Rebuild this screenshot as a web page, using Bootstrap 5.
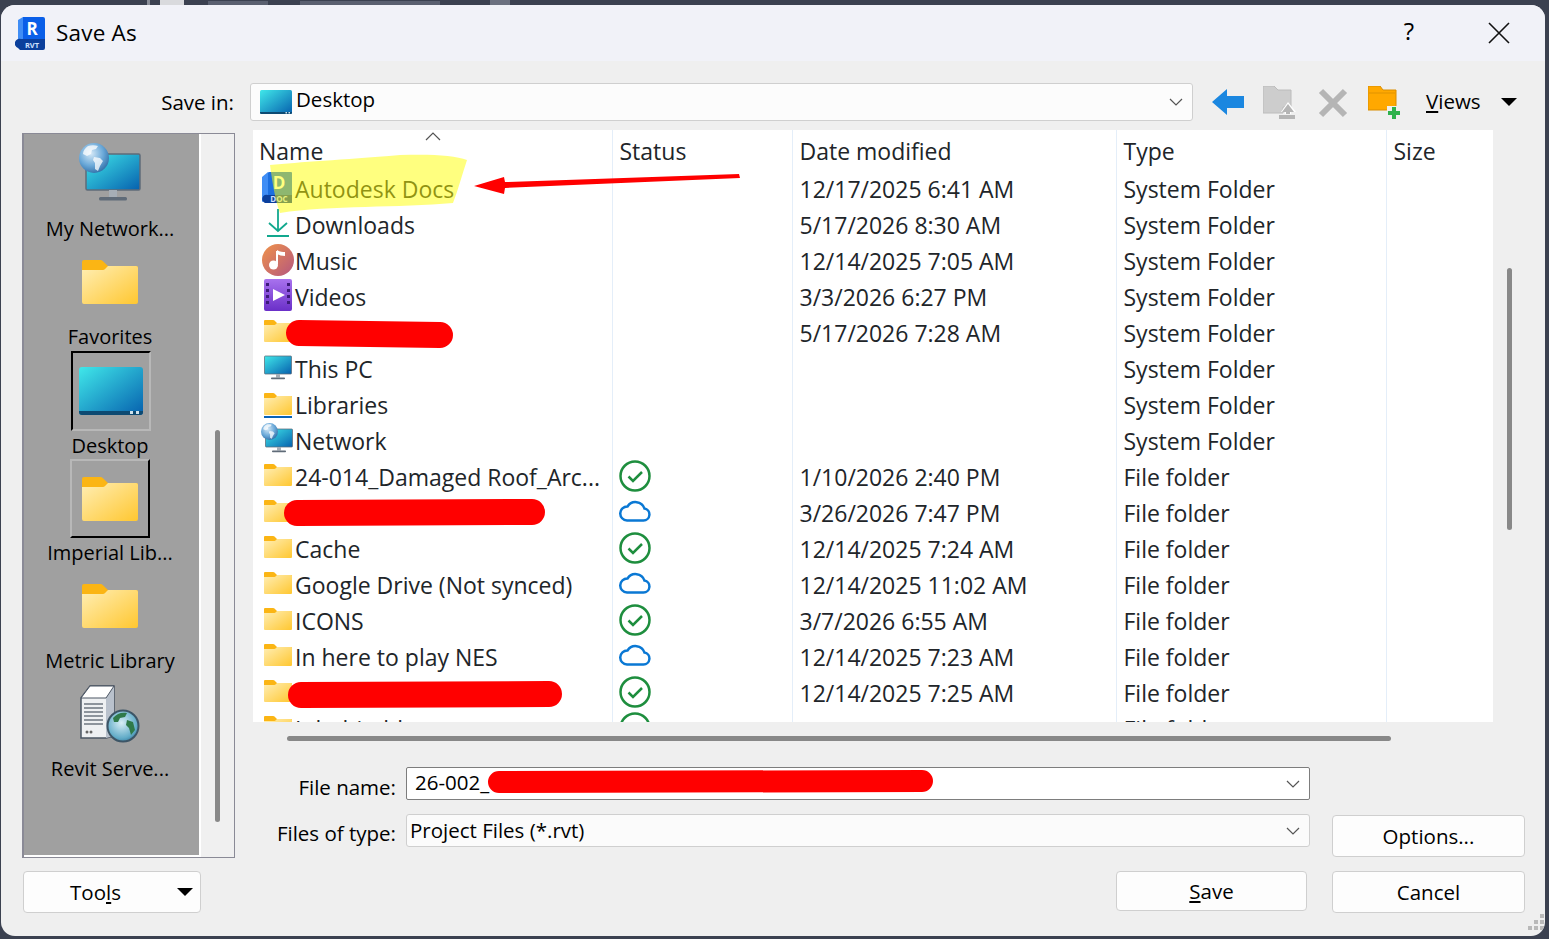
<!DOCTYPE html>
<html lang="en">
<head>
    <meta charset="UTF-8">
    <meta name="viewport" content="width=device-width, initial-scale=1.0">
    <title>Save As</title>
    <link rel="stylesheet" href="https://cdn.jsdelivr.net/npm/bootstrap@5.3.0/dist/css/bootstrap.min.css">
    <style>
        html, body { height: 100%; }
        body { background: #3b4150; overflow: hidden; font-family: "Open Sans", "Noto Sans", sans-serif; color: #000; }
        .behind { position: absolute; left: 0; top: 0; }
        .dlg { position: relative; width: 1544px; height: 931px; margin: 5px 0 0 1px; background: #efefef; border-radius: 14px; overflow: hidden; }
        .ttl { height: 56px; background: #f1f2f8; padding: 0 35px 0 14px; }
        .ttl-txt { font-size: 22.500px; margin-left: 9px; letter-spacing: .2px; }
        .ttl-help { font-size: 24px; margin-right: 74px; margin-top: -4px; }
        .lbl { font-size: 20.500px; text-align: right; white-space: nowrap; }
        .tbar { height: 38px; margin-top: 22px; }
        .tbar .lbl { width: 233px; }
        .combo { background: #fff; border: 1px solid #cfcfcf; border-radius: 3px; font-size: 20.500px; display: flex; align-items: center; }
        .combo-top { width: 943px; height: 38px; margin-left: 16px; padding-left: 9px; margin-right: 19px; background: #fcfcfc; }
        .combo-top span { margin-left: 4px; margin-top: -6px; }
        .chev { margin-left: auto; margin-right: 9px; flex: none; }
        .tool-ico { flex: none; }
        .views { font-size: 20.500px; margin-left: 25px; margin-top: -2px; }
        .tri { width: 0; height: 0; border-left: 8px solid transparent; border-right: 8px solid transparent; border-top: 8px solid #000; flex: none; }
        .mainrow { margin-top: 9px; padding-left: 21px; }
        .leftcol { width: 214px; flex: none; padding-top: 3px; }
        .side { width: 213px; height: 725px; border: 1px solid #8a8a96; border-left-width: 2px; background: #f0f0f0; }
        .side-items { width: 177px; background: #a0a0a0; border-right: 2px solid #fff; border-bottom: 2px solid #fff; flex: none; }
        .side-item { height: 108px; padding-right: 3px; }
        .side-item-box { padding-top: 1px; }
        .side-ico { width: 80px; height: 80px; margin: 0 auto; border: 2px solid transparent; }
        .side-on { border-color: #000 #b8b8b8 #b8b8b8 #000; margin: 0 0 0 47px; }
        .side-pick { border-color: #b8b8b8 #000 #000 #b8b8b8; height: 79px; }
        .side-lbl { font-size: 20px; height: 27px; line-height: 28px; margin-top: 1px; text-align: center; white-space: nowrap; }
        .side-track { flex: 1; padding: 296px 0 0 14px; }
        .side-thumb { width: 5px; height: 392px; border-radius: 3px; background: #888; }
        .btn-win { background: #fdfdfd; border: 1px solid #cfcfcf; border-radius: 4px; font-size: 20.500px; color: #000; padding: 0; display: flex; align-items: center; justify-content: center; }
        .btn-win:hover { background: #fdfdfd; border-color: #cfcfcf; color: #000; }
        .btn-tools { width: 178px; height: 42px; margin: 13px 0 0 1px; position: relative; padding-right: 33px; }
        .btn-tools .tri { position: absolute; right: 7px; top: 16px; }
        .rightcol { margin-left: 17px; width: 1272px; flex: none; }
        .listbox { width: 1240px; height: 592px; background: #fff; overflow: hidden; flex: none; }
        .flist { margin: 0; width: 1240px; table-layout: fixed; font-size: 23px; --bs-table-bg: transparent; }
        .flist th, .flist td { padding: 0; height: 36px; vertical-align: middle; font-weight: 400; white-space: nowrap; border: 0; border-left: 1px solid #e4eef9; }
        .flist th:first-child, .flist td:first-child { border-left: 0; }
        .flist thead th { height: 42px; padding: 0 0 1px 7px; line-height: 36px; position: relative; }
        .flist thead th:first-child { padding-left: 6px; }
        .flist td { padding: 0 0 2px 7px; line-height: 34px; }
        .flist td:first-child { padding-left: 8px; }
        .flist td:nth-child(2) { padding: 0 0 0 6px; }
        .cell-name { display: flex; align-items: center; height: 34px; }
        .cell-ico { width: 34px; flex: none; display: flex; justify-content: center; align-items: center; }
        .cell-ico svg { display: block; flex: none; }
        .ico-docs { margin: -4px 0 0 -2px; }
        .ico-down { margin-top: -5px; }
        .ico-music { margin-top: -3px; }
        .ico-video { margin-top: -4px; }
        .ico-folder { margin-top: -4px; }
        .ico-pc { margin-top: -2px; }
        .ico-net { margin: -4px 0 0 -2px; }
        .lib-bar { width: 28px; height: 2px; margin-top: 1px; background: #0a63b8; }
        .st-ok { margin-bottom: 4px; }
        .st-cloud { margin-bottom: 8px; }
        .sort-up { position: absolute; left: 172px; top: 2px; }
        .vtrack { padding: 138px 0 0 14px; }
        .vthumb { width: 5px; height: 262px; background: #888; border-radius: 3px; }
        .hthumb { width: 1104px; height: 5px; background: #888; border-radius: 3px; margin: 14px 0 0 34px; }
        .frow-lbl { width: 143px; flex: none; margin-right: 10px; }
        .frow-name { margin-top: 8px; }
        .frow-type { margin-top: 6px; }
        .combo-file { width: 904px; height: 33px; padding-left: 8px; border-color: #7d7d7d; border-radius: 2px; }
        .combo-type { width: 904px; height: 33px; padding-left: 3px; background: #fbfbfb; }
        .combo-file span { margin-top: -3px; }
        .combo-type span { margin-top: -1px; }
        .frow1 { margin-top: 26px; height: 33px; }
        .frow2 { margin-top: 14px; height: 33px; }
        .btn-opt { width: 193px; height: 42px; margin: 15px 0 0 22px; flex: none; }
        .btnrow { margin: 14px 0 0 863px; }
        .btn-save { width: 191px; height: 40px; }
        .btn-cancel { width: 193px; height: 42px; margin-left: 25px; }
        .ink { position: absolute; left: -1px; top: -5px; pointer-events: none; }
        .grip { position: absolute; right: 0; bottom: 4px; }
    </style>
</head>
<body>

<!-- bits of the window behind the dialog -->
<svg class="behind" width="1549" height="5">
    <rect x="147" y="0" width="3" height="5" fill="#8b8f99"/>
    <rect x="160" y="0" width="24" height="5" fill="#d9dadd"/>
    <rect x="208" y="1" width="60" height="4" fill="#5a6070"/>
    <rect x="300" y="1" width="140" height="4" fill="#5a6070"/>
    <rect x="490" y="0" width="20" height="5" fill="#6c7180"/>
</svg>

<!-- shared icons -->
<svg width="0" height="0" class="position-absolute">
    <defs>
        <linearGradient id="gFolder" x1="0" y1="0" x2="1" y2="1"><stop offset="0" stop-color="#ffeeb4"/><stop offset="1" stop-color="#ffc730"/></linearGradient>
        <linearGradient id="gScreen" x1="0" y1="0" x2="1" y2="1"><stop offset="0" stop-color="#40e8ea"/><stop offset="1" stop-color="#0660ae"/></linearGradient>
        <linearGradient id="gMusic" x1="0" y1="0" x2="1" y2="1"><stop offset="0" stop-color="#f0934a"/><stop offset="1" stop-color="#b4567f"/></linearGradient>
        <linearGradient id="gVideo" x1="0" y1="0" x2="0" y2="1"><stop offset="0" stop-color="#a872ee"/><stop offset="1" stop-color="#6a2fc8"/></linearGradient>
        <radialGradient id="gGlobe" cx=".4" cy=".35" r=".75"><stop offset="0" stop-color="#d5e9f7"/><stop offset=".55" stop-color="#6aa8d8"/><stop offset="1" stop-color="#25629c"/></radialGradient>
        <radialGradient id="gGlobe2" cx=".45" cy=".4" r=".7"><stop offset="0" stop-color="#d8eef5"/><stop offset=".7" stop-color="#62acc8"/><stop offset="1" stop-color="#2a6f95"/></radialGradient>

        <symbol id="i-folder" viewBox="0 0 56 44">
            <path d="M2 0H18a4 4 0 0 1 3 1.200L26 6H54a2 2 0 0 1 2 2V14H0V2A2 2 0 0 1 2 0z" fill="#fbb514"/>
            <path d="M0 10H21a3 3 0 0 0 2-1L26 6H54a2 2 0 0 1 2 2V42a2 2 0 0 1-2 2H2a2 2 0 0 1-2-2z" fill="url(#gFolder)"/>
        </symbol>
        <symbol id="i-desktop" viewBox="0 0 64 48">
            <rect width="64" height="48" rx="3" fill="url(#gScreen)"/>
            <path d="M0 44H64V45a3 3 0 0 1-3 3H3a3 3 0 0 1-3-3z" fill="#0d4a72"/>
            <rect x="51" y="44" width="3" height="3" fill="#cfe3ee"/><rect x="57" y="44" width="3" height="3" fill="#cfe3ee"/>
        </symbol>
        <symbol id="i-monitor" viewBox="0 0 56 50">
            <rect x="1" y="1" width="54" height="36" rx="1.500" fill="url(#gScreen)" stroke="#5f6b78" stroke-width="1.500"/>
            <rect x="24" y="37" width="8" height="7" fill="#a6aeb6"/>
            <rect x="14" y="44" width="28" height="3.500" rx="1.500" fill="#5f6b78"/>
        </symbol>
        <symbol id="i-globe" viewBox="0 0 30 30">
            <circle cx="15" cy="15" r="15" fill="url(#gGlobe)"/>
            <path d="M9 3c3-1 7-1 10 0l-2 3-4 1-1 4-4 2-4-2c0-3 2-6 5-8zM15 14l6 1 3 3-3 5-2 5-3-2 0-6-2-3z" fill="#fff" opacity=".75"/>
        </symbol>
        <symbol id="i-cloud" viewBox="0 0 32 24">
            <path d="M8 22.500H24.500a6 6 0 0 0 1-11.900A9.500 9.500 0 0 0 8.500 8.500 7 7 0 0 0 8 22.500z" fill="none" stroke="#0a78d4" stroke-width="2.500"/>
        </symbol>
        <symbol id="i-check" viewBox="0 0 32 32">
            <circle cx="16" cy="16" r="14.500" fill="#fff" stroke="#1e8e3e" stroke-width="2.500"/>
            <path d="M9.500 16.500l4.500 4.500 9-9" fill="none" stroke="#1e8e3e" stroke-width="2.500"/>
        </symbol>
        <symbol id="i-chev" viewBox="0 0 14 8">
            <path d="M1 1l6 6 6-6" fill="none" stroke="#555" stroke-width="1.200"/>
        </symbol>
    </defs>
</svg>

<div class="dlg">
    <!-- title bar -->
    <div class="ttl d-flex align-items-center">
        <svg width="32" height="33" viewBox="0 0 32 33" class="flex-none">
            <path d="M3 3L8 0V28L3 31z" fill="#3f8df5"/>
            <path d="M8 0H28a2 2 0 0 1 2 2V22H8z" fill="#0a5fe8"/>
            <path d="M3 31a3 3 0 0 1 3-9H30V31a2 2 0 0 1-2 2H5z" fill="#0b3f9c"/>
            <text x="17" y="18" font-family="Open Sans" font-weight="700" font-size="17" fill="#fff" text-anchor="middle">R</text>
            <text x="17" y="30.500" font-family="Open Sans" font-weight="700" font-size="7.500" fill="#cfe0ff" text-anchor="middle">RVT</text>
        </svg>
        <span class="ttl-txt">Save As</span>
        <span class="ttl-help ms-auto">?</span>
        <svg width="22" height="22" viewBox="0 0 22 22"><path d="M1 1L21 21M21 1L1 21" stroke="#111" stroke-width="1.600" fill="none"/></svg>
    </div>

    <!-- save in -->
    <div class="tbar d-flex align-items-center">
        <div class="lbl">Save in:</div>
        <div class="combo combo-top">
            <svg width="32" height="24"><use href="#i-desktop"/></svg>
            <span>Desktop</span>
            <svg class="chev" width="14" height="8"><use href="#i-chev"/></svg>
        </div>
        <svg class="tool-ico" width="32" height="26" viewBox="0 0 32 26"><path d="M0 13L15 0V7H32V19H15V26z" fill="#1b87e0"/></svg>
        <svg class="tool-ico" style="margin-left:19px" width="33" height="33" viewBox="0 0 33 33">
            <path d="M0 0H11L15 4H28V21H20V27H0z" fill="#cdcdcd" stroke="#bcbcbc"/>
            <path d="M25 16L33 26H28V28H22V26H18z" fill="#fff"/><path d="M25 18L31 26H27V28H23V26H19z" fill="#b5b5b5"/><rect x="16" y="29" width="16" height="4" fill="#b5b5b5"/>
        </svg>
        <svg class="tool-ico" style="margin-left:22px;margin-top:2px" width="30" height="30" viewBox="0 0 30 30"><path d="M3 3L27 27M27 3L3 27" stroke="#b5b5b5" stroke-width="6" fill="none"/></svg>
        <svg class="tool-ico" style="margin-left:20px" width="33" height="33" viewBox="0 0 33 33">
            <path d="M0 0H12L15 4H28V22H21V24H0z" fill="#ffa800" stroke="#d98d00"/>
            <path d="M1 7H27" stroke="#e09300" fill="none"/>
            <rect x="19" y="20" width="14" height="13" fill="#efefef"/>
            <path d="M26 21V33M20 27H32" stroke="#2fb24c" stroke-width="4" fill="none"/>
        </svg>
        <span class="views"><u>V</u>iews</span>
        <span class="tri" style="margin-left:20px"></span>
    </div>

    <div class="mainrow d-flex">
        <!-- places bar -->
        <div class="leftcol">
            <div class="side d-flex">
                <div class="side-items">
                    <div class="side-item">
                        <div class="side-ico d-flex align-items-center justify-content-center position-relative">
                            <svg width="62" height="62" viewBox="0 0 62 62"><use href="#i-monitor" x="6" y="10" width="56" height="50"/><use href="#i-globe" x="0" y="0" width="30" height="30"/></svg>
                        </div>
                        <div class="side-lbl">My Network...</div>
                    </div>
                    <div class="side-item">
                        <div class="side-ico d-flex align-items-center justify-content-center"><svg width="56" height="44"><use href="#i-folder"/></svg></div>
                        <div class="side-lbl">Favorites</div>
                    </div>
                    <div class="side-item side-item-box">
                        <div class="side-ico side-on d-flex align-items-center justify-content-center"><svg width="64" height="48"><use href="#i-desktop"/></svg></div>
                        <div class="side-lbl">Desktop</div>
                    </div>
                    <div class="side-item side-item-box">
                        <div class="side-ico side-pick d-flex align-items-center justify-content-center"><svg width="56" height="44"><use href="#i-folder"/></svg></div>
                        <div class="side-lbl">Imperial Lib...</div>
                    </div>
                    <div class="side-item">
                        <div class="side-ico d-flex align-items-center justify-content-center"><svg width="56" height="44"><use href="#i-folder"/></svg></div>
                        <div class="side-lbl">Metric Library</div>
                    </div>
                    <div class="side-item">
                        <div class="side-ico d-flex align-items-center justify-content-center">
                            <svg width="60" height="58" viewBox="0 0 60 58">
                                <path d="M1 13L10 1H34V51L26 53H1z" fill="#eef0f2" stroke="#4b5563" stroke-width="1.500"/>
                                <path d="M26 12L34 1V51L26 53z" fill="#b9c1cc"/>
                                <path d="M1 13L10 1H34L26 13z" fill="#fff" stroke="#4b5563"/>
                                <path d="M4 19H23M4 23H23M4 27H23M4 31H23M4 35H23M4 39H23" stroke="#8d949c" stroke-width="2"/>
                                <circle cx="7" cy="47" r="1.500" fill="#666"/><circle cx="11" cy="47" r="1.500" fill="#666"/>
                                <circle cx="43" cy="41" r="15.500" fill="url(#gGlobe2)" stroke="#3d5566" stroke-width="2"/>
                                <path d="M33 33c4-5 9-6 14-5l-2 4-5 1-2 4-4 0zM47 35l6 2 2 8-4 5-2-7-3-3z" fill="#2f7a4a"/>
                            </svg>
                        </div>
                        <div class="side-lbl">Revit Serve...</div>
                    </div>
                </div>
                <div class="side-track"><div class="side-thumb"></div></div>
            </div>
            <button type="button" class="btn btn-win btn-tools">Too<u>l</u>s<span class="tri"></span></button>
        </div>

        <!-- file list -->
        <div class="rightcol">
            <div class="d-flex">
                <div class="listbox">
                    <table class="table flist">
                        <colgroup><col style="width:359px"><col style="width:180px"><col style="width:324px"><col style="width:270px"><col style="width:107px"></colgroup>
                        <thead>
                            <tr>
                                <th>Name<svg class="sort-up" width="16" height="10" viewBox="0 0 16 10"><path d="M1 8l7-7 7 7" fill="none" stroke="#555" stroke-width="1.200"/></svg></th>
                                <th>Status</th><th>Date modified</th><th>Type</th><th>Size</th>
                            </tr>
                        </thead>
                        <tbody id="rows"></tbody>
                    </table>
                </div>
                <div class="vtrack"><div class="vthumb"></div></div>
            </div>
            <div class="hthumb"></div>

            <div class="frow1 d-flex align-items-center">
                <div class="lbl frow-lbl frow-name">File name:</div>
                <div class="combo combo-file"><span>26-002_</span><svg class="chev" width="14" height="8"><use href="#i-chev"/></svg></div>
            </div>
            <div class="d-flex">
                <div class="frow2 d-flex align-items-center">
                    <div class="lbl frow-lbl frow-type">Files of type:</div>
                    <div class="combo combo-type"><span>Project Files (*.rvt)</span><svg class="chev" width="14" height="8"><use href="#i-chev"/></svg></div>
                </div>
                <button type="button" class="btn btn-win btn-opt">Options...</button>
            </div>
            <div class="btnrow d-flex">
                <button type="button" class="btn btn-win btn-save"><span><u>S</u>ave</span></button>
                <button type="button" class="btn btn-win btn-cancel">Cancel</button>
            </div>
        </div>
    </div>

    <svg class="grip" width="18" height="18" viewBox="0 0 18 18" fill="#b9b9b9">
        <rect x="13" y="0" width="4" height="4"/><rect x="7" y="6" width="4" height="4"/><rect x="13" y="6" width="4" height="4"/>
        <rect x="1" y="12" width="4" height="4"/><rect x="7" y="12" width="4" height="4"/><rect x="13" y="12" width="4" height="4"/>
    </svg>

    <!-- markup drawn over the screenshot -->
    <svg class="ink" width="1549" height="939" viewBox="0 0 1549 939">
        <path d="M270 165C300 162 340 160 400 155C430 154 455 155 467 160C462 175 458 190 453 203C400 208 330 205 280 213C275 200 272 180 270 165z" fill="#ffff00" fill-opacity=".5"/>
        <path d="M474 186L504 177L505 182L739 174L740 178L505 188L504 194z" fill="#f00"/>
        <g stroke="#f00" stroke-width="26" stroke-linecap="round" fill="none">
            <path d="M299 333L440 335"/>
            <path d="M297 513L532 512"/>
            <path d="M301 695L549 694"/>
            <path d="M499 782L922 781" stroke-width="22"/>
        </g>
    </svg>
</div>

<script>
    // file rows: [icon, name, status, date, type]
    const rows = [
        ["docs", "Autodesk Docs", "", "12/17/2025 6:41 AM", "System Folder"],
        ["down", "Downloads", "", "5/17/2026 8:30 AM", "System Folder"],
        ["music", "Music", "", "12/14/2025 7:05 AM", "System Folder"],
        ["video", "Videos", "", "3/3/2026 6:27 PM", "System Folder"],
        ["folder", "", "", "5/17/2026 7:28 AM", "System Folder"],
        ["pc", "This PC", "", "", "System Folder"],
        ["lib", "Libraries", "", "", "System Folder"],
        ["net", "Network", "", "", "System Folder"],
        ["folder", "24-014_Damaged Roof_Arc...", "ok", "1/10/2026 2:40 PM", "File folder"],
        ["folder", "", "cloud", "3/26/2026 7:47 PM", "File folder"],
        ["folder", "Cache", "ok", "12/14/2025 7:24 AM", "File folder"],
        ["folder", "Google Drive (Not synced)", "cloud", "12/14/2025 11:02 AM", "File folder"],
        ["folder", "ICONS", "ok", "3/7/2026 6:55 AM", "File folder"],
        ["folder", "In here to play NES", "cloud", "12/14/2025 7:23 AM", "File folder"],
        ["folder", "", "ok", "12/14/2025 7:25 AM", "File folder"],
        ["folder", "Inhabitable", "ok", "", "File folder"]
    ];
    const icons = {
        folder: '<svg class="ico-folder" width="28" height="22"><use href="#i-folder"/></svg>',
        docs: '<svg class="ico-docs" width="30" height="33" viewBox="0 0 30 33"><path d="M0 6L6 1V28L0 31z" fill="#3f8df5"/><rect x="6" y="1" width="24" height="24" rx="1" fill="#1c6fe0"/><path d="M3 32a3 3 0 0 1 3-8H30V32z" fill="#0b3f9c"/><text x="17" y="18" font-family="Open Sans" font-weight="700" font-size="17" fill="#fff" text-anchor="middle">D</text><text x="17" y="31" font-family="Open Sans" font-weight="700" font-size="8" fill="#cfe0ff" text-anchor="middle">DOC</text></svg>',
        down: '<svg class="ico-down" width="30" height="30" viewBox="0 0 30 30"><path d="M15 1V23M6 15l9 8 9-8M4 28H26" fill="none" stroke="#12a88e" stroke-width="1.800"/></svg>',
        music: '<svg class="ico-music" width="32" height="32" viewBox="0 0 32 32"><circle cx="16" cy="16" r="16" fill="url(#gMusic)"/><path d="M15 7V20" stroke="#fff" stroke-width="2"/><path d="M15 6c3 2 6 2 8 2v4c-3 0-6-1-8-2z" fill="#fff"/><circle cx="11.500" cy="21" r="4.500" fill="#fff"/></svg>',
        video: '<svg class="ico-video" width="28" height="32" viewBox="0 0 28 32"><rect width="28" height="32" rx="2" fill="url(#gVideo)"/><path d="M9 10L21 16 9 22z" fill="#fff"/><path d="M2 4h3v3H2zM2 10h3v3H2zM2 16h3v3H2zM2 22h3v3H2zM23 4h3v3h-3zM23 10h3v3h-3zM23 16h3v3h-3zM23 22h3v3h-3z" fill="#3c1a7a"/></svg>',
        pc: '<svg class="ico-pc" width="28" height="26"><use href="#i-monitor"/></svg>',
        lib: '<div><svg width="28" height="22"><use href="#i-folder"/></svg><div class="lib-bar"></div></div>',
        net: '<svg class="ico-net" width="32" height="32" viewBox="0 0 32 32"><use href="#i-monitor" x="4" y="5" width="28" height="26"/><use href="#i-globe" x="0" y="0" width="17" height="17"/></svg>'
    };
    const status = {
        ok: '<svg width="32" height="32" class="d-block st-ok"><use href="#i-check"/></svg>',
        cloud: '<svg width="32" height="24" class="d-block st-cloud"><use href="#i-cloud"/></svg>'
    };
    document.getElementById("rows").innerHTML = rows.map(r => `
        <tr>
            <td><div class="cell-name"><div class="cell-ico">${icons[r[0]]}</div><span>${r[1]}</span></div></td>
            <td>${status[r[2]] || ""}</td>
            <td>${r[3]}</td>
            <td>${r[4]}</td>
            <td></td>
        </tr>`).join("");
</script>
<script src="https://cdn.jsdelivr.net/npm/bootstrap@5.3.0/dist/js/bootstrap.bundle.min.js"></script>
</body>
</html>
